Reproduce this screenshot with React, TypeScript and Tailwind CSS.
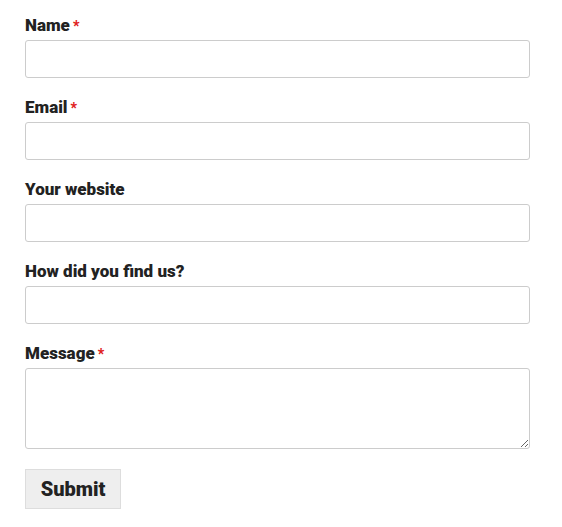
export default function App() {
  const fields = [
    { id: "name", label: "Name", required: true },
    { id: "email", label: "Email", required: true },
    { id: "website", label: "Your website", required: false },
    { id: "find", label: "How did you find us?", required: false },
  ];

  const Star = () => (
    <span className="text-[#e02020] ml-[3px] text-[14px] align-top relative top-[1px]">*</span>
  );

  return (
    <div
      className="min-h-screen bg-white text-[#222]"
      style={{ fontFamily: 'Roboto, "Liberation Sans", Arial, sans-serif' }}
    >
      <form className="pl-[25px] pr-[32px] pt-[13px]">
        {fields.map((f) => (
          <div key={f.id} className="mb-[17px]">
            <label htmlFor={f.id} className="block text-[17px] leading-[24px] font-black">
              {f.label}
              {f.required && <Star />}
            </label>
            <input
              id={f.id}
              type="text"
              className="mt-[3px] block w-[505px] h-[38px] border border-[#ccc] rounded-[3px] bg-white px-2 focus:outline-none"
            />
          </div>
        ))}

        <div className="mb-[20px]">
          <label htmlFor="message" className="block text-[17px] leading-[24px] font-black">
            Message
            <Star />
          </label>
          <textarea
            id="message"
            className="mt-[3px] block w-[505px] h-[81px] border border-[#ccc] rounded-[3px] bg-white px-2 py-1 focus:outline-none"
          />
        </div>

        <button
          type="submit"
          className="block w-[96px] h-[40px] bg-[#eee] border border-[#ddd] text-[20px] font-black text-[#222]"
        >
          Submit
        </button>
      </form>
    </div>
  );
}
